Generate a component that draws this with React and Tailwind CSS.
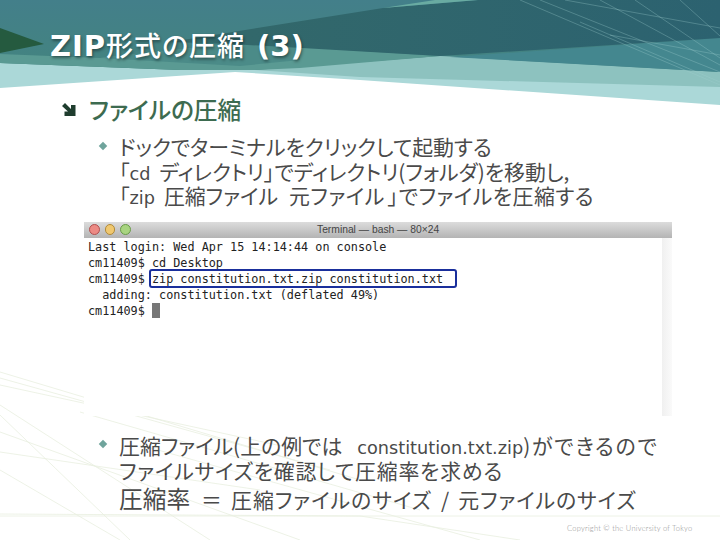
import React from "react";

const cjk = '"Noto Sans CJK JP", "Noto Sans", sans-serif';

const fanLines = [
  [0, 372, 360, 480], [0, 378, 330, 470], [0, 385, 300, 450], [0, 405, 210, 540], [0, 415, 130, 540],
  [0, 432, 300, 540], [0, 452, 260, 490], [0, 470, 120, 540], [0, 514, 360, 516], [0, 516, 720, 516],
  [80, 412, 420, 510], [140, 445, 480, 540], [360, 516, 520, 540],
];

const headerLines = [
  [520, 0, 720, 85], [540, 0, 720, 72], [565, 0, 720, 28], [600, 0, 720, 65], [635, 0, 720, 58],
  [680, 0, 720, 36], [610, 35, 720, 55], [580, 22, 720, 82],
];

function SlideBackground() {
  return (
    <svg className="absolute inset-0" width="720" height="540" viewBox="0 0 720 540">
      <defs>
        <linearGradient id="head" x1="0" y1="0" x2="0" y2="1">
          <stop offset="0" stopColor="#437f8a" />
          <stop offset="1" stopColor="#43847f" />
        </linearGradient>
        <linearGradient id="dark" x1="0" y1="0" x2="1" y2="0">
          <stop offset="0" stopColor="#33696a" />
          <stop offset="1" stopColor="#2c6270" />
        </linearGradient>
      </defs>
      {fanLines.map(([a, b, c, d], i) => (
        <line key={i} x1={a} y1={b} x2={c} y2={d} stroke="#e8efe0" strokeWidth="0.8" />
      ))}
      <polygon points="0,0 720,0 720,105 360,80 235,72 0,88" fill="#abd8d8" />
      <polygon points="0,63 180,70 255,70 360,77 720,87 720,72 440,56 255,65" fill="#8dc2bf" />
      <polygon points="0,0 720,0 720,72 440,56 255,70 180,70 0,63" fill="url(#head)" />
      <polygon points="0,54 100,58 230,44 300,47 440,56 300,68 255,70 180,70 0,63" fill="#5a9a93" />
      <polygon points="100,58 230,44 300,47 300,60 240,66" fill="#4b8b88" />
      <polygon points="450,57 720,38 720,72" fill="#44878f" />
      <polygon points="170,42 383,8 478,0 720,0 720,38 440,56 230,44" fill="url(#dark)" />
      <polygon points="383,8 435,0 478,0" fill="#69aba2" />
      <polygon points="0,28 44,44 0,53" fill="#255a3f" />
      {headerLines.map(([a, b, c, d], i) => (
        <line key={i} x1={a} y1={b} x2={c} y2={d} stroke="#9fd0d0" strokeOpacity="0.4" strokeWidth="0.8" />
      ))}
    </svg>
  );
}

function ArrowBullet() {
  return (
    <svg width="14" height="13" viewBox="0 0 14 13" className="shrink-0">
      <path d="M0 3 L3 0 L9 6 L9 2 L13.5 2 L13.5 13 L2.5 13 L2.5 8.5 L6 8.5 Z" fill="#1f3d2e" />
    </svg>
  );
}

function Diamond() {
  return <span className="mt-[9px] h-[6px] w-[6px] shrink-0 rotate-45 bg-[#6fa49c]" />;
}

function Latin({ children }) {
  return <span className="font-['DejaVu_Sans',sans-serif] text-[17.7px]">{children}</span>;
}

function Terminal() {
  return (
    <div className="ml-[84px] flex h-[194px] w-[588px] flex-col bg-white">
      <div className="relative flex h-[16px] items-center bg-gradient-to-b from-[#dcdcdc] to-[#b4b4b4] pl-[5px]">
        <div className="flex gap-[5px]">
          <span className="h-[10.5px] w-[10.5px] rounded-full border border-[#b05050] bg-[#ec8a84]" />
          <span className="h-[10.5px] w-[10.5px] rounded-full border border-[#b08a3a] bg-[#f0c870]" />
          <span className="h-[10.5px] w-[10.5px] rounded-full border border-[#6a9a4a] bg-[#a8d480]" />
        </div>
        <span className="absolute left-[233px] top-[1px] font-['Liberation_Sans',sans-serif] text-[10.3px] leading-[14px] text-[#444]">
          Terminal — bash — 80×24
        </span>
      </div>
      <div className="flex min-h-0 flex-1">
        <div className="flex-1 pl-[4px] pt-[1px] font-['DejaVu_Sans_Mono',monospace] text-[11.8px] leading-[16px] text-[#222]">
          <div>Last login: Wed Apr 15 14:14:44 on console</div>
          <div>cm11409$ cd Desktop</div>
          <div className="relative whitespace-pre">
            cm11409$ zip constitution.txt.zip constitution.txt
            <span className="absolute left-[61px] top-[-2px] h-[19px] w-[308px] rounded-[3px] border-2 border-[#1a2f9c]" />
          </div>
          <div className="whitespace-pre">  adding: constitution.txt (deflated 49%)</div>
          <div className="flex items-center gap-[7px]">
            cm11409$ <span className="h-[15px] w-[8px] bg-[#777]" />
          </div>
        </div>
        <div className="w-[10px] bg-gradient-to-r from-[#f0f0f0] to-[#fafafa]" />
      </div>
    </div>
  );
}

export default function App() {
  return (
    <div className="relative h-[540px] w-[720px] overflow-hidden bg-white [font-feature-settings:'palt']" style={{ fontFamily: cjk }}>
      <SlideBackground />
      <div className="relative flex h-full flex-col">
        <h1 className="pl-[50px] pt-[27px] text-[27px] font-bold leading-[36px] text-white [text-shadow:1px_2px_3px_rgba(0,0,0,0.4)]">
          <span className="font-['DejaVu_Sans',sans-serif] text-[29px] tracking-[1px]">ZIP</span>
          <span className="tracking-[1px] font-medium">形式の圧縮</span>
          <span className="ml-[12px] font-['DejaVu_Sans',sans-serif] text-[29px]">(3)</span>
        </h1>
        <div className="mt-[28px] flex items-center gap-[13px] pl-[62px] text-[23.7px] font-medium leading-[34px] text-[#3d6b50]">
          <ArrowBullet />
          <span>ファイルの圧縮</span>
        </div>
        <div className="mt-[8px] flex gap-[13px] pl-[100px] text-[20.9px] leading-[24.5px] text-[#4a4a4a]">
          <Diamond />
          <div className="whitespace-nowrap">
            <div className="h-[24.5px]">ドックでターミナルをクリックして起動する</div>
            <div className="h-[24.5px]">「<Latin>cd</Latin><span className="ml-[9px]">ディレクトリ</span>」でディレクトリ(フォルダ)を移動し,</div>
            <div className="h-[24.5px]">
              「<Latin>zip</Latin><span className="ml-[9px]">圧縮ファイル</span><span className="ml-[11px] tracking-[0.5px]">元ファイル</span>
              <span className="ml-[3px] tracking-[0.5px]">」でファイルを圧縮する</span>
            </div>
          </div>
        </div>
        <div className="mt-[14px]">
          <Terminal />
        </div>
        <div className="mt-[16px] flex gap-[13px] pl-[100px] text-[20.9px] leading-[26px] text-[#4a4a4a]">
          <Diamond />
          <div className="whitespace-nowrap">
            <div className="h-[25px]">
              圧縮ファイル(上の例では<span className="ml-[15px]"><Latin>constitution.txt.zip</Latin></span>
              <span className="tracking-[1.8px]">)ができるので</span>
            </div>
            <div className="h-[27px] tracking-[0.8px]">ファイルサイズを確認して圧縮率を求める</div>
            <div className="h-[28px] leading-[28px]">
              <span className="text-[23.7px]">圧縮率</span>
              <span className="ml-[11px]">＝</span>
              <span className="ml-[9px] tracking-[1px]">圧縮ファイルのサイズ</span>
              <span className="ml-[9px]">/</span>
              <span className="ml-[9px] tracking-[0.9px]">元ファイルのサイズ</span>
            </div>
          </div>
        </div>
        <div className="absolute left-[567px] top-[523px] font-['Lato',sans-serif] text-[7.5px] font-light leading-[12px] tracking-[0.25px] text-[#8f8f8f]">
          Copyright © the University of Tokyo
        </div>
      </div>
    </div>
  );
}
